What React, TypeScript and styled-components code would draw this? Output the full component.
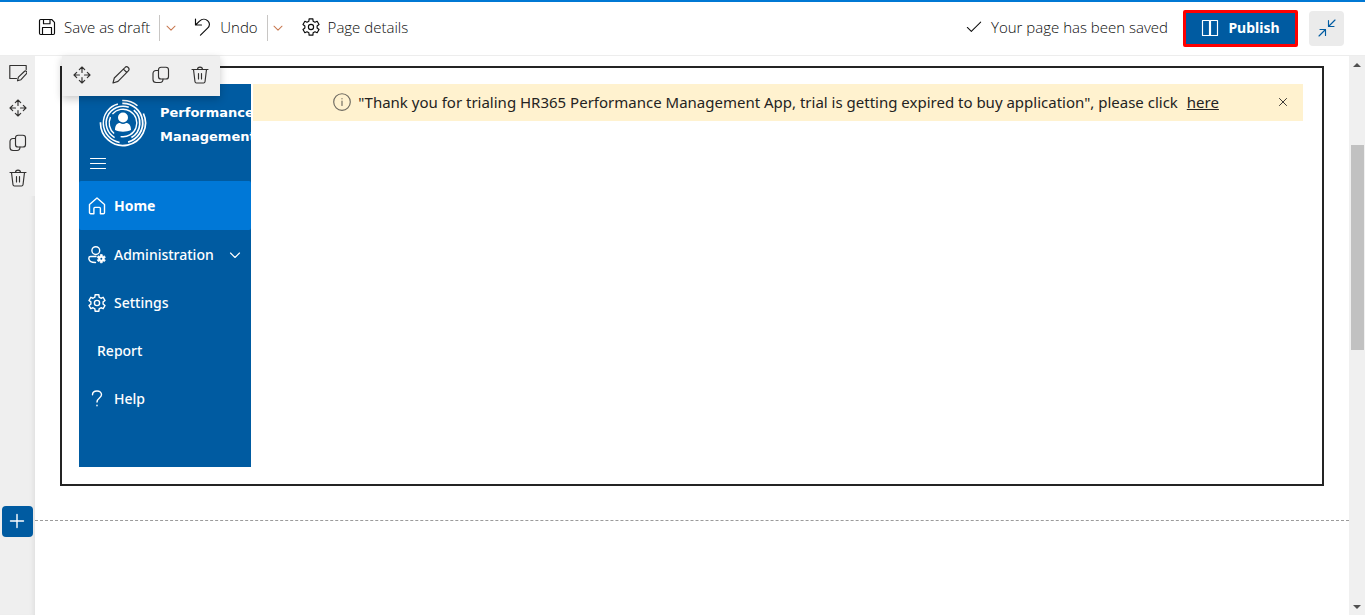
import React from "react";
import styled, { createGlobalStyle } from "styled-components";

const blue = "#005ba1";
const ink = "#323130";

const GlobalStyle = createGlobalStyle`
  * { box-sizing: border-box; }
  body { margin: 0; background: #fff; color: ${ink}; font: 15px/20px "Noto Sans", "Open Sans", sans-serif; }
  button { font: inherit; color: inherit; border: 0; background: none; padding: 0; cursor: pointer; }
  a { color: inherit; }
`;

const Svg = styled.svg<{ $size: number; $weight: number }>`
  width: ${(p) => p.$size}px;
  height: ${(p) => p.$size}px;
  flex: none;
  display: block;
  fill: none;
  stroke: currentColor;
  stroke-width: ${(p) => p.$weight};
  stroke-linecap: round;
  stroke-linejoin: round;
`;

const polar = (cx: number, cy: number, r: number, deg: number) => {
  const a = (deg * Math.PI) / 180;
  return `${(cx + r * Math.cos(a)).toFixed(2)} ${(cy + r * Math.sin(a)).toFixed(2)}`;
};

/* Outline of a six-toothed cog centred on cx, cy. */
const cog = (cx: number, cy: number, outer: number, inner: number) =>
  [0, 1, 2, 3, 4, 5]
    .map((i) => {
      const a = i * 60 - 90;
      return [
        polar(cx, cy, inner, a - 20),
        polar(cx, cy, outer, a - 13),
        polar(cx, cy, outer, a + 13),
        polar(cx, cy, inner, a + 20),
      ].join("L");
    })
    .reduce((d, part) => `${d}${d ? "L" : "M"}${part}`, "") + "z";

const arc = (r: number, from: number, to: number) =>
  `M${polar(24, 24, r, from)}A${r} ${r} 0 ${to - from > 180 ? 1 : 0} 1 ${polar(24, 24, r, to)}`;

const shapes = {
  save: (
    <>
      <path d="M2.500 1.500h11.200l2.800 2.800v11a1.200 1.200 0 0 1-1.200 1.200H2.700a1.200 1.200 0 0 1-1.200-1.200V2.700a1.200 1.200 0 0 1 1.200-1.200z" />
      <path d="M5.500 1.500v4.200h6.500V1.500M4.500 16.500V9.500h9v7" />
    </>
  ),
  undo: <path d="M1.500 1v6h6M1.500 7 5.500 3.200c2.500-2.400 6-2.600 8.300-.4 2.200 2.100 2.200 5.200-.2 7.400L6.500 17.200" />,
  gear: (
    <>
      <path d={cog(9, 9, 8.4, 6.2)} />
      <circle cx="9" cy="9" r="2.600" />
    </>
  ),
  chevron: <path d="m4.500 7 4.500 4.500L13.500 7" />,
  check: <path d="m1.500 9.500 4.500 4.500L16.500 3.500" />,
  book: <path d="M1.500 1.500h7v15h-7zM9.500 1.500h7v15h-7z" />,
  collapse: <path d="M17 1 10.500 7.500M10.500 1.500v6H16M1 17l6.500-6.500M2 10.500h5.500v6" />,
  edit: (
    <>
      <path d="M7.500 14.500H.8V1.500h16.400v4" />
      <path d="m8.500 16.800.9-3.600 5.900-5.700a1.500 1.500 0 0 1 2.200 2.200L12 15.700z" />
    </>
  ),
  move: (
    <path d="M9 1v5.500M6.300 3.700 9 1l2.700 2.700M9 17v-5.500M6.300 14.300 9 17l2.700-2.700M1 9h5.500M3.700 6.300 1 9l2.700 2.700M17 9h-5.500M14.300 6.300 17 9l-2.700 2.700" />
  ),
  pencil: <path d="m1 17 1.300-5L12.900 1.600a1.900 1.900 0 0 1 3.400 3.200L6 15.400zM11.400 3.100l3.400 3.400" />,
  copy: (
    <>
      <rect x="6.500" y="1.200" width="10" height="11.800" rx="2.600" />
      <path d="M6.500 4.500H4C2.200 4.500 1 5.800 1 7.500v6c0 1.800 1.200 3 3 3h4c1.800 0 3-1.300 3-3.500" />
    </>
  ),
  trash: <path d="M1 3.500h16M6.500 3.500C6.500.3 11.500.3 11.500 3.500M2.500 3.500 4 15.700c.1.800.6 1.300 1.400 1.300h7.200c.8 0 1.300-.5 1.400-1.300L15.500 3.500M7.500 7.500v5.500M10.500 7.500v5.500" />,
  menu: <path d="M1.500 3.500h15M1.500 8.500h15M1.500 13.500h15" />,
  home: <path d="M1.500 7.500 9 1l7.500 6.500v8c0 .7-.4 1.200-1.100 1.200h-3V11.500c0-.7-.4-1.100-1-1.100H6.900c-.6 0-1 .4-1 1.100v5.200H2.700c-.7 0-1.200-.5-1.200-1.200z" />,
  admin: (
    <>
      <circle cx="7.800" cy="4.600" r="3.900" />
      <path d="M8 10.500H2.600C1.500 10.500.8 11.200.8 12.200c0 2.600 2.500 4.300 6.700 4.300" />
      <path d={cog(13.3, 12.700, 4.2, 2.9)} fill="currentColor" strokeWidth=".8" />
      <circle cx="13.300" cy="12.700" r="1" fill={blue} stroke="none" />
    </>
  ),
  help: <path d="M4.500 4.800C4.500 2.500 6.300 1 9 1s4.500 1.500 4.500 3.800C13.500 8 9 8 9 12M9 15.200v.6" />,
  info: (
    <>
      <circle cx="9" cy="9" r="8.300" />
      <path d="M9 8v4.500M9 5.500v.3" />
    </>
  ),
  close: <path d="m5 5 8 8M13 5l-8 8" />,
  plus: <path d="M9 2.500v13M2.500 9h13" />,
};

function Icon({ name, size = 18, weight = 1.15 }: { name: keyof typeof shapes; size?: number; weight?: number }) {
  return (
    <Svg viewBox="0 0 18 18" $size={size} $weight={weight} aria-hidden="true">
      {shapes[name]}
    </Svg>
  );
}

const Page = styled.div`
  min-height: 100vh;
  display: flex;
  flex-direction: column;
  border-top: 2px solid #0078d4;
`;

const CommandBar = styled.header`
  display: flex;
  align-items: center;
  justify-content: space-between;
  height: 54px;
  padding: 0 21px 1px 37px;
  border-bottom: 1px solid #ededed;
  color: #0c0c0c;
  font-family: "Open Sans", sans-serif;
  font-weight: 350;
`;

const Commands = styled.div`
  display: flex;
  align-items: center;
`;

const Command = styled.button`
  display: flex;
  align-items: center;
  gap: 8px;
  padding: 0 0 2px 1px;
`;

const SplitToggle = styled.button`
  display: flex;
  align-items: center;
  justify-content: center;
  width: 22px;
  height: 26px;
  margin: 0 12px 0 9px;
  border-left: 1px solid #c8c6c4;
  color: #c87850;
`;

const Status = styled.span`
  display: flex;
  align-items: center;
  gap: 9px;
  margin-right: 15px;
  padding-bottom: 2px;
`;

const Publish = styled.button`
  display: flex;
  align-items: center;
  justify-content: center;
  gap: 9px;
  width: 115px;
  height: 37px;
  margin-right: 11px;
  border: 3px solid #f00;
  border-radius: 2px;
  background: ${blue};
  color: #fff;
  font: 700 14px/20px "Noto Sans", sans-serif;
`;

const CollapseButton = styled.button`
  display: grid;
  place-items: center;
  width: 35px;
  height: 35px;
  border-radius: 4px;
  background: #ebebeb;
  color: ${blue};
`;

const Body = styled.div`
  flex: 1;
  display: flex;
`;

const Canvas = styled.main`
  flex: 1;
  min-width: 0;
  display: grid;
  grid-template-columns: 35px 1fr;
  grid-template-rows: auto auto 1fr;
`;

const Rail = styled.div`
  background: #efefef;
  box-shadow: inset -5px 0 5px -4px #dcdcdc;
`;

const RailTools = styled.div`
  display: flex;
  flex-direction: column;
  height: 140px;
  background: #efefef;
`;

const RailButton = styled.button`
  display: grid;
  place-items: center;
  height: 35px;
  padding-bottom: 2px;
`;

const Section = styled.section`
  position: relative;
  padding: 10px 25px 20px;
`;

const WebPart = styled.div`
  display: flex;
  align-items: flex-start;
  gap: 2px;
  padding: 16px 19px 17px 17px;
  border: 2px solid #242424;
`;

const FloatingTools = styled.div`
  position: absolute;
  top: 0;
  left: 27px;
  display: flex;
  width: 158px;
  height: 40px;
  background: #efefef;
  box-shadow: 0 3px 8px rgba(0, 0, 0, 0.22);
`;

const FloatingButton = styled.button`
  flex: 1;
  display: grid;
  place-items: center;
  padding-bottom: 2px;
`;

const SideNav = styled.nav`
  flex: none;
  width: 172px;
  min-height: 383px;
  overflow: hidden;
  background: ${blue};
  color: #fff;
`;

const Brand = styled.div`
  display: flex;
  gap: 13px;
  height: 69px;
  padding: 15px 0 0 20px;
`;

const BrandName = styled.div`
  font: 700 13px/24px "DejaVu Sans", sans-serif;
  padding-top: 2px;
`;

const MenuButton = styled.button`
  display: flex;
  align-items: center;
  height: 28px;
  padding: 0 10px 6px;
`;

const NavLink = styled.a<{ $active?: boolean }>`
  display: flex;
  align-items: center;
  gap: 8px;
  height: ${(p) => (p.$active ? 49 : 48)}px;
  padding: ${(p) => (p.$active ? 0 : 2)}px 7px 0 9px;
  border-radius: 2px;
  background: ${(p) => (p.$active ? "#0078d7" : "transparent")};
  font-weight: ${(p) => (p.$active ? 700 : 500)};
  font-size: 14px;
  text-decoration: none;
`;

const NavText = styled.span`
  flex: 1;
`;

const NavPlain = styled.span`
  padding-left: 9px;
`;

const Banner = styled.div`
  flex: 1;
  min-width: 0;
  display: flex;
  align-items: center;
  justify-content: center;
  height: 37px;
  padding: 0 12px 1px 0;
  background: #fff2cf;
  color: #242322;
  font-weight: 400;
`;

const Message = styled.p`
  flex: 1;
  display: flex;
  align-items: center;
  justify-content: center;
  gap: 7px;
  margin: 0;
  padding-left: 24px;
`;

const InfoMark = styled.span`
  color: #6e6a60;
`;

const HereLink = styled.a`
  margin-left: 5px;
`;

const AddCell = styled(Rail)`
  padding: 0 2px;
`;

const AddButton = styled.button`
  display: grid;
  place-items: center;
  width: 31px;
  height: 31px;
  padding: 0 2px 2px 0;
  border-radius: 4px;
  background: ${blue};
  color: #fff;
`;

const Divider = styled.div`
  height: 15px;
  border-bottom: 1px dashed #9b9b9b;
`;

const ScrollTrack = styled.div`
  display: flex;
  flex-direction: column;
  align-items: center;
  justify-content: space-between;
  width: 16px;
  padding: 7px 0 6px;
  background: #f0f0f0;
`;

const ScrollSpace = styled.div`
  flex: 1;
  align-self: stretch;
  padding: 78px 1px 0 2px;
`;

const ScrollThumb = styled.div`
  height: 205px;
  background: #c1c1c1;
`;

const ScrollArrow = styled.div<{ $down?: boolean }>`
  border: 4px solid transparent;
  border-top: ${(p) => (p.$down ? "4px solid #505050" : "0")};
  border-bottom: ${(p) => (p.$down ? "0" : "4px solid #505050")};
`;

const Logo = styled.svg`
  flex: none;
  width: 48px;
  height: 48px;
  fill: none;
  stroke: #fff;
`;

function BrandLogo() {
  return (
    <Logo viewBox="0 0 48 48" aria-hidden="true">
      <path d={arc(22.5, -92, -50)} strokeWidth="1.600" />
      <path d={arc(22.5, -25, 182)} strokeWidth="1.700" />
      <path d={arc(19.7, -92, 75)} strokeWidth="1.800" />
      <path d={arc(19.7, 100, 255)} strokeWidth="1.500" />
      <path d={arc(16.800, -50, 60)} strokeWidth="1.700" />
      <path d={arc(16.800, 120, 290)} strokeWidth="1.500" />
      <path d={arc(13.800, -140, 100)} strokeWidth="1.400" />
      <path d={arc(13.800, 130, 205)} strokeWidth="1.400" />
      <circle cx="24" cy="18.500" r="5" fill="#fff" stroke="none" />
      <path d="M16 31c0-4.500 2-7 5-7 2 1.200 4 1.200 6 0 3 0 5 2.500 5 7-4.500 2.200-11.500 2.200-16 0z" fill="#fff" stroke="none" />
    </Logo>
  );
}

export default function App() {
  return (
    <>
      <GlobalStyle />
      <Page>
        <CommandBar>
          <Commands>
            <Command><Icon name="save" />Save as draft</Command>
            <SplitToggle aria-label="Save options"><Icon name="chevron" size={16} /></SplitToggle>
            <Command><Icon name="undo" />Undo</Command>
            <SplitToggle aria-label="Undo options"><Icon name="chevron" size={16} /></SplitToggle>
            <Command><Icon name="gear" />Page details</Command>
          </Commands>
          <Commands>
            <Status role="status"><Icon name="check" size={16} />Your page has been saved</Status>
            <Publish><Icon name="book" />Publish</Publish>
            <CollapseButton aria-label="Collapse"><Icon name="collapse" /></CollapseButton>
          </Commands>
        </CommandBar>
        <Body>
          <Canvas>
            <Rail>
              <RailTools role="toolbar" aria-label="Section tools">
                <RailButton aria-label="Edit section"><Icon name="edit" /></RailButton>
                <RailButton aria-label="Move section"><Icon name="move" /></RailButton>
                <RailButton aria-label="Duplicate section"><Icon name="copy" /></RailButton>
                <RailButton aria-label="Delete section"><Icon name="trash" /></RailButton>
              </RailTools>
            </Rail>
            <Section>
              <WebPart>
                <SideNav>
                  <Brand>
                    <BrandLogo />
                    <BrandName>Performance<br />Management</BrandName>
                  </Brand>
                  <MenuButton aria-label="Menu"><Icon name="menu" /></MenuButton>
                  <NavLink href="#home" $active><Icon name="home" weight={1.4} /><NavText>Home</NavText></NavLink>
                  <NavLink href="#administration">
                    <Icon name="admin" weight={1.4} /><NavText>Administration</NavText><Icon name="chevron" />
                  </NavLink>
                  <NavLink href="#settings"><Icon name="gear" weight={1.4} /><NavText>Settings</NavText></NavLink>
                  <NavLink href="#report"><NavPlain>Report</NavPlain></NavLink>
                  <NavLink href="#help"><Icon name="help" weight={1.4} /><NavText>Help</NavText></NavLink>
                </SideNav>
                <Banner>
                  <Message>
                    <InfoMark><Icon name="info" /></InfoMark>
                    <span>
                      "Thank you for trialing HR365 Performance Management App, trial is getting expired to buy application", please click{" "}
                      <HereLink href="#buy">here</HereLink>
                    </span>
                  </Message>
                  <button aria-label="Dismiss"><Icon name="close" size={16} weight={1} /></button>
                </Banner>
              </WebPart>
              <FloatingTools role="toolbar" aria-label="Web part tools">
                <FloatingButton aria-label="Move web part"><Icon name="move" /></FloatingButton>
                <FloatingButton aria-label="Edit web part"><Icon name="pencil" /></FloatingButton>
                <FloatingButton aria-label="Duplicate web part"><Icon name="copy" /></FloatingButton>
                <FloatingButton aria-label="Delete web part"><Icon name="trash" /></FloatingButton>
              </FloatingTools>
            </Section>
            <AddCell>
              <AddButton aria-label="Add a new section"><Icon name="plus" weight={1.4} /></AddButton>
            </AddCell>
            <Divider />
            <Rail />
          </Canvas>
          <ScrollTrack>
            <ScrollArrow />
            <ScrollSpace><ScrollThumb /></ScrollSpace>
            <ScrollArrow $down />
          </ScrollTrack>
        </Body>
      </Page>
    </>
  );
}
